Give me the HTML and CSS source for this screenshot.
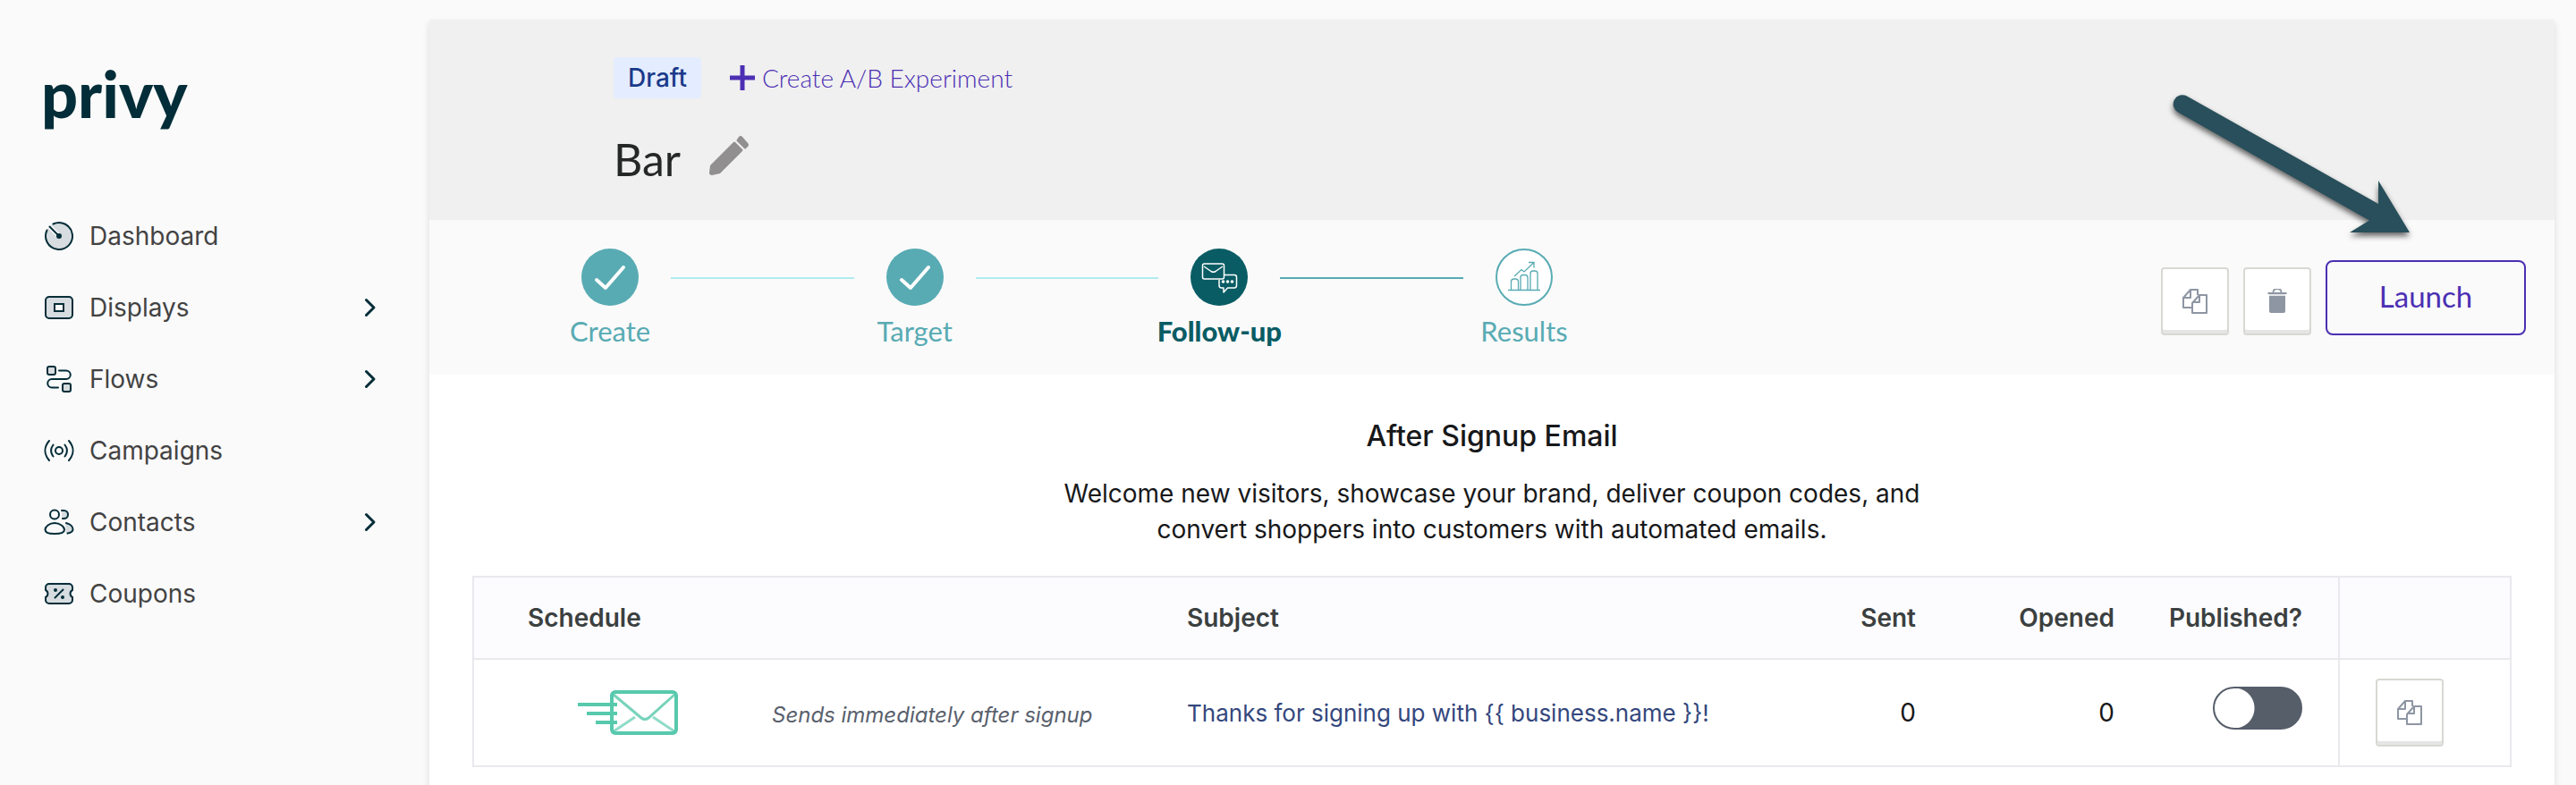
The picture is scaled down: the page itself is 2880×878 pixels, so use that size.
FILE: index.html
```html
<!DOCTYPE html>
<html lang="en">
  <head>
    <meta charset="utf-8">
    <title>Bar - Privy</title>
    <link rel="stylesheet" href="styles.css">
  </head>
<body>

<svg class="symbols" aria-hidden="true">
  <symbol id="chevron" viewBox="0 0 16 24">
    <path d="M3.500 3.500L12 12l-8.500 8.500" fill="none" stroke="#032d38" stroke-width="3" stroke-linecap="round" stroke-linejoin="round"/>
  </symbol>
  <symbol id="copy" viewBox="0 0 28 28">
    <g fill="none" stroke="#8e96a3" stroke-width="2" stroke-linejoin="round">
      <path d="M10 21H1V10l8-9h8v6"/>
      <path d="M9 1v9H1"/>
      <path d="M11 16l8-9h8v20H11z"/>
      <path d="M19 7v8h-8"/>
    </g>
  </symbol>
</svg>

<div class="app">
  <aside class="sidebar">
    <a class="logo" href="#">privy</a>
    <nav class="menu">
      <a href="#">
        <svg class="menu-icon" viewBox="0 0 34 34">
          <circle cx="17" cy="17" r="15" fill="#d6dcdf"/>
          <path d="M10.500 3.500A15 15 0 1 1 3.500 10.500" fill="none" stroke="#032d38" stroke-width="2" stroke-linecap="round"/>
          <path d="M7 7l10 10" stroke="#fafafa" stroke-width="5"/>
          <path d="M6.500 6.500L17 17" stroke="#032d38" stroke-width="2" stroke-linecap="round"/>
          <circle cx="17" cy="17" r="3" fill="#032d38"/>
        </svg>
        <span>Dashboard</span>
      </a>
      <a href="#">
        <svg class="menu-icon" viewBox="0 0 34 34">
          <rect x="2" y="5" width="30" height="24" rx="4" fill="#d6dcdf" stroke="#032d38" stroke-width="2"/>
          <rect x="12" y="13" width="10" height="8" fill="#fff" stroke="#032d38" stroke-width="2"/>
        </svg>
        <span>Displays</span>
        <svg class="chevron"><use href="#chevron"/></svg>
      </a>
      <a href="#">
        <svg class="menu-icon" viewBox="0 0 34 34">
          <g fill="none" stroke="#032d38" stroke-width="2" stroke-linecap="round">
            <rect x="4" y="3" width="9" height="9" rx="2" fill="#d6dcdf"/>
            <rect x="21" y="22" width="9" height="9" rx="2" fill="#d6dcdf"/>
            <path d="M17 7.500h8a4.700 4.700 0 0 1 0 9.500H9a4.700 4.700 0 0 0 0 9.500h7"/>
          </g>
        </svg>
        <span>Flows</span>
        <svg class="chevron"><use href="#chevron"/></svg>
      </a>
      <a href="#">
        <svg class="menu-icon" viewBox="0 0 34 34">
          <g fill="none" stroke="#032d38" stroke-width="2" stroke-linecap="round">
            <circle cx="17" cy="17" r="4"/>
            <path d="M10.500 10.500c-3 4-3 9 0 13M23.500 10.500c3 4 3 9 0 13"/>
            <path d="M6 6c-6 7-6 15 0 22M28 6c6 7 6 15 0 22"/>
          </g>
        </svg>
        <span>Campaigns</span>
      </a>
      <a href="#">
        <svg class="menu-icon" viewBox="0 0 34 34">
          <path d="M20 4h3.500a4.500 4.500 0 0 1 0 9H20zM24 18c5 1 8 4 8 7s-4 4.500-7 4.500z" fill="#d6dcdf"/>
          <g fill="none" stroke="#032d38" stroke-width="2" stroke-linecap="round">
            <circle cx="12" cy="8.500" r="5"/>
            <path d="M12 18c6 0 11 4 11 7.500 0 3-4 4.500-11 4.500S1.500 28.500 1.500 25.500C1.500 22 6 18 12 18z"/>
            <path d="M20 4h2.500a4.500 4.500 0 0 1 0 9H21M25 18c4.500 1 7.500 4 7.500 7 0 2.500-3 4-6 4.500"/>
          </g>
        </svg>
        <span>Contacts</span>
        <svg class="chevron"><use href="#chevron"/></svg>
      </a>
      <a href="#">
        <svg class="menu-icon" viewBox="0 0 34 34">
          <path d="M6 6h22a4 4 0 0 1 4 4v3a4.500 4.500 0 0 0 0 8v3a4 4 0 0 1-4 4H6a4 4 0 0 1-4-4v-3a4.500 4.500 0 0 0 0-8v-3a4 4 0 0 1 4-4z" fill="#d6dcdf" stroke="#032d38" stroke-width="2" stroke-linejoin="round"/>
          <path d="M12.500 21.500l9-9" stroke="#032d38" stroke-width="2" stroke-linecap="round"/>
          <circle cx="13" cy="13" r="2" fill="#032d38"/>
          <circle cx="21" cy="21" r="2" fill="#032d38"/>
        </svg>
        <span>Coupons</span>
      </a>
    </nav>
  </aside>

  <main class="panel">
    <header class="panel-header">
      <div class="status-row">
        <span class="badge">Draft</span>
        <a class="experiment" href="#">
          <svg class="plus" viewBox="0 0 28 28"><path d="M14 0v28M0 14h28" stroke="#4c2fb3" stroke-width="5"/></svg>
          Create A/B Experiment
        </a>
      </div>
      <div class="title-row">
        <h1>Bar</h1>
        <button class="edit" aria-label="Edit name">
          <svg viewBox="0 0 44 44" fill="#918f90">
            <path d="M1 33L27 7q1-1 2 0l8 8q1 1 0 2L12 42l-9 2q-3 0-3-3z"/>
            <path d="M31 4l2-3q2-2 4 0l6 7q2 2 0 4l-2 2q-1 1-2 0l-8-8q-1-1 0-2z"/>
          </svg>
        </button>
      </div>
    </header>

    <section class="toolbar">
      <ol class="steps">
        <li class="step">
          <svg viewBox="0 0 64 64">
            <circle cx="32" cy="32" r="32" fill="#58abb3"/>
            <path d="M17 35l10 9 20-23" fill="none" stroke="#fff" stroke-width="4" stroke-linecap="round" stroke-linejoin="round"/>
          </svg>
          <a href="#">Create</a>
        </li>
        <li class="line"></li>
        <li class="step">
          <svg viewBox="0 0 64 64">
            <circle cx="32" cy="32" r="32" fill="#58abb3"/>
            <path d="M17 35l10 9 20-23" fill="none" stroke="#fff" stroke-width="4" stroke-linecap="round" stroke-linejoin="round"/>
          </svg>
          <a href="#">Target</a>
        </li>
        <li class="line"></li>
        <li class="step current">
          <svg viewBox="0 0 64 64">
            <circle cx="32" cy="32" r="32" fill="#095c64"/>
            <g fill="none" stroke="#fff" stroke-width="1.500" stroke-linejoin="round">
              <rect x="13.500" y="17" width="24" height="17" rx="2"/>
              <path d="M15 20l8 5.500q2.500 1.500 5 0l8-5.500"/>
              <path d="M38 29.500h11q2.500 0 2.500 2.500v9q0 3-2.500 3h-7.500l-4.500 5v-5h-2.500q-2.500 0-2.500-3v-6"/>
            </g>
            <g fill="#fff">
              <circle cx="36.500" cy="37" r="1.800"/>
              <circle cx="41.500" cy="37" r="1.800"/>
              <circle cx="46.500" cy="37" r="1.800"/>
            </g>
          </svg>
          <a href="#">Follow-up</a>
        </li>
        <li class="line next"></li>
        <li class="step">
          <svg viewBox="0 0 64 64">
            <circle cx="32" cy="32" r="31" fill="#fff" stroke="#58abb3" stroke-width="2"/>
            <g fill="none" stroke="#58abb3" stroke-width="1.300">
              <path d="M14 46.500h36"/>
              <path d="M17.500 46V37q0-3 3-3h2q3 0 3 3v9"/>
              <path d="M28 46V32.500q0-3 3-3h2q3 0 3 3V46"/>
              <path d="M39 46V28q0-3 3-3h2q3 0 3 3v18"/>
              <path d="M21 31l8-7.500 3 2.500 11-10.500M37 15.500h6v6"/>
            </g>
          </svg>
          <a href="#">Results</a>
        </li>
      </ol>
      <div class="actions">
        <button class="icon-btn" aria-label="Duplicate"><svg><use href="#copy"/></svg></button>
        <button class="icon-btn" aria-label="Delete">
          <svg viewBox="0 0 28 28">
            <path d="M9.500 4q0-4 4.500-4t4.500 4" fill="none" stroke="#8e96a3" stroke-width="1.800"/>
            <path d="M3.500 4h21v2h-21zM5 8h18v17q0 2-2 2H7q-2 0-2-2z" fill="#8e96a3"/>
            <path d="M5 6h18v2H5z" fill="#e3e5e8"/>
          </svg>
        </button>
        <button class="launch">Launch</button>
      </div>
      <svg class="arrow" viewBox="0 0 280 170">
        <path d="M24 17.500L238 138V112l35 58h-67l22-13.500L14 35.500a10 10 0 0 1 10-18z" fill="#284f5b"/>
      </svg>
    </section>

    <section class="content">
      <h2>After Signup Email</h2>
      <p class="intro">Welcome new visitors, showcase your brand, deliver coupon codes, and<br>convert shoppers into customers with automated emails.</p>
      <table class="emails">
        <colgroup>
          <col class="col-icon">
          <col class="col-when">
          <col>
          <col class="col-sent">
          <col class="col-opened">
          <col class="col-published">
          <col class="col-copy">
        </colgroup>
        <thead>
          <tr>
            <th class="schedule" colspan="2">Schedule</th>
            <th>Subject</th>
            <th class="num">Sent</th>
            <th class="num">Opened</th>
            <th class="published" id="published">Published?</th>
            <th class="copy"></th>
          </tr>
        </thead>
        <tbody>
          <tr>
            <td class="send-icon">
              <svg viewBox="0 0 112 50">
                <g fill="none" stroke="#57c9ac">
                  <path d="M40 5l31 26q4 3 8 0l29-26" stroke="#77d3bb" stroke-width="3"/>
                  <path d="M40 46l24-16M108 46L84 30" stroke="#8fdcc8" stroke-width="3"/>
                  <rect x="38" y="2" width="72" height="46" rx="4" stroke-width="4"/>
                  <path d="M0 16h44M10 26h34M20 36h24" stroke-width="4"/>
                </g>
              </svg>
            </td>
            <td class="when">Sends immediately after signup</td>
            <td class="subject"><a href="#">Thanks for signing up with {{ business.name }}!</a></td>
            <td class="num">0</td>
            <td class="num">0</td>
            <td class="published"><input class="switch" type="checkbox" aria-labelledby="published"></td>
            <td class="copy"><button class="icon-btn" aria-label="Duplicate"><svg><use href="#copy"/></svg></button></td>
          </tr>
        </tbody>
      </table>
    </section>
  </main>
</div>

</body>
</html>
```

FILE: styles.css
```css
* {
  box-sizing: border-box;
}

body {
  margin: 0;
  background-color: #fafafa;
  font-family: Inter, "Liberation Sans", sans-serif;
  font-size: 28px;
  color: #17181a;
}

a {
  text-decoration: none;
}

svg {
  display: block;
  flex: none;
}

button {
  font-family: inherit;
  cursor: pointer;
}

.symbols {
  position: absolute;
  width: 0;
  height: 0;
}

.app {
  display: flex;
  min-height: 100vh;
}

/* sidebar */

.sidebar {
  width: 480px;
  flex: none;
  padding: 56px 58px 0 46px;
}

.logo {
  display: block;
  height: 96px;
  line-height: 96px;
  margin-bottom: 72px;
  font-family: Lato, sans-serif;
  font-size: 72px;
  font-weight: 900;
  color: #032d38;
}

.menu a {
  display: flex;
  align-items: center;
  height: 80px;
  padding-left: 2px;
  color: #434343;
}

.menu span {
  flex: 1;
}

.menu-icon {
  width: 36px;
  height: 34px;
  margin-right: 16px;
}

.chevron {
  width: 16px;
  height: 24px;
}

/* panel */

.panel {
  flex: 1;
  min-width: 0;
  margin: 22px 24px 0 0;
  background-color: #fff;
  box-shadow: 0 4px 8px rgba(0, 0, 0, 0.12);
}

.panel-header {
  height: 224px;
  padding: 42px 206px 0;
  background-color: #f0f0f0;
}

.status-row {
  display: flex;
  align-items: center;
  gap: 32px;
}

.badge {
  padding: 0 16px;
  line-height: 46px;
  border-radius: 4px;
  background-color: #e4edff;
  color: #1b3a8a;
  font-weight: 500;
}

.experiment {
  display: flex;
  align-items: center;
  gap: 8px;
  font-family: Lato, sans-serif;
  font-weight: 300;
  color: #4c2fb3;
}

.plus {
  width: 28px;
  height: 28px;
}

.title-row {
  display: flex;
  align-items: center;
  gap: 32px;
  margin-top: 36px;
}

h1 {
  margin: 0;
  font-family: Lato, sans-serif;
  font-size: 50px;
  line-height: 64px;
  font-weight: 400;
  color: #262827;
}

.edit {
  padding: 0 0 8px;
  border: none;
  background: none;
}

.edit svg {
  width: 44px;
  height: 44px;
}

.toolbar {
  position: relative;
  display: flex;
  justify-content: space-between;
  height: 173px;
  padding: 32px 32px 0 170px;
  background-color: #fafafa;
}

.steps {
  display: flex;
  gap: 36px;
  width: 1086px;
  margin: 0;
  padding: 0;
  list-style: none;
}

.step {
  display: flex;
  flex-direction: column;
  align-items: center;
  gap: 10px;
  width: 64px;
}

.step svg {
  width: 64px;
  height: 64px;
}

.step a {
  font-family: Lato, sans-serif;
  font-size: 31px;
  line-height: 36px;
  white-space: nowrap;
  color: #58abb3;
}

.step.current a {
  font-weight: 900;
  color: #095c64;
}

.line {
  flex: 1;
  height: 2px;
  margin-top: 32px;
  background-color: #b0ebed;
}

.line.next {
  background-color: #58abb3;
}

.actions {
  display: flex;
  align-items: flex-end;
  gap: 16px;
  height: 97px;
}

.icon-btn {
  display: flex;
  align-items: center;
  justify-content: center;
  width: 76px;
  height: 76px;
  padding: 0;
  border: 2px solid #d8d8d4;
  border-radius: 4px;
  background-color: #fff;
  box-shadow: inset 0 -4px 0 #e5e5e5;
}

.icon-btn svg {
  width: 28px;
  height: 28px;
}

.launch {
  width: 224px;
  height: 84px;
  padding: 0 0 4px;
  border: 2px solid #4c2fb3;
  border-radius: 8px;
  background-color: transparent;
  font-family: Lato, sans-serif;
  font-size: 33px;
  color: #4c2fb3;
}

/* pointer to the launch button */
.arrow {
  position: absolute;
  right: 155px;
  top: -156px;
  width: 280px;
  height: 170px;
  overflow: visible;
  filter: drop-shadow(0 4px 3px rgba(0, 0, 0, 0.6));
}

.content {
  padding: 49px 48px 20px;
}

h2 {
  margin: 0 0 24px;
  font-size: 32px;
  line-height: 40px;
  font-weight: 500;
  text-align: center;
}

.intro {
  margin: 0 0 32px;
  line-height: 40px;
  text-align: center;
}

/* email table */

.emails {
  width: 100%;
  table-layout: fixed;
  border-collapse: collapse;
  border: 2px solid #e9e9ee;
}

.emails tr {
  border-bottom: 2px solid #e9e9ee;
}

.emails th {
  height: 92px;
  padding: 0 32px;
  background-color: #fcfcfe;
  color: #3b4040;
  font-weight: 600;
  text-align: left;
}

.emails td {
  height: 120px;
  padding: 0 32px;
}

.col-icon {
  width: 302px;
}

.col-when {
  width: 464px;
}

.col-sent,
.col-opened {
  width: 222px;
}

.col-published {
  width: 219px;
}

.col-copy {
  width: 192px;
}

.emails .schedule {
  padding-left: 60px;
}

.emails .num {
  text-align: right;
}

.emails .published {
  padding: 0 40px 0 0;
  text-align: right;
}

.emails .copy {
  padding: 0 40px;
  border-left: 2px solid #e9e9ee;
}

.emails .send-icon {
  padding: 0 0 0 116px;
}

.send-icon svg {
  width: 112px;
  height: 50px;
}

.emails .when {
  padding-top: 4px;
  font-size: 24px;
  font-style: italic;
  color: #59606d;
}

.emails .subject {
  font-size: 26px;
  white-space: nowrap;
}

.subject a {
  color: #34477d;
}

.emails td.published {
  padding-bottom: 10px;
}

.switch {
  appearance: none;
  display: block;
  width: 100px;
  height: 48px;
  margin: 0 0 0 auto;
  border: 2px solid #565e6a;
  border-radius: 24px;
  background: radial-gradient(circle at 22px 22px, #fff 22px, #565e6a 23px);
  cursor: pointer;
}

.switch:checked {
  background: radial-gradient(circle at 74px 22px, #fff 22px, #58abb3 23px);
}
```
